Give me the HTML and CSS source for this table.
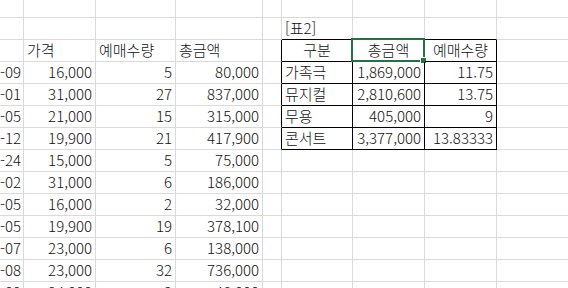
FILE: index.html
```html
<!DOCTYPE html>
<html lang="ko">
<head>
<meta charset="utf-8">
<link rel="stylesheet" href="styles.css">
</head>
<body>
<div class="sheet">
  <!-- row 0 -->
  <div class="c"></div><div class="c"></div><div class="c"></div><div class="c"></div><div class="c"></div><div class="c"></div><div class="c"></div><div class="c"></div><div class="c"></div>
  <!-- row 1 -->
  <div class="c"></div><div class="c"></div><div class="c"></div><div class="c"></div><div class="c"></div><div class="c tt l">[표2]</div><div class="c tt"></div><div class="c tt"></div><div class="c"></div>
  <!-- row 2 -->
  <div class="c"></div><div class="c l">가격</div><div class="c l">예매수량</div><div class="c l">총금액</div><div class="c tl"></div><div class="c tb ctr">구분</div><div class="c tb ctr sel">총금액<span class="selbox"><span class="handle"></span></span></div><div class="c tb ctr">예매수량</div><div class="c"></div>
  <!-- row 3 -->
  <div class="c r d">2023-04-09</div><div class="c r">16,000</div><div class="c r">5</div><div class="c r">80,000</div><div class="c tl"></div><div class="c tb l">가족극</div><div class="c tb r">1,869,000</div><div class="c tb r">11.75</div><div class="c"></div>
  <!-- row 4 -->
  <div class="c r d">2023-05-01</div><div class="c r">31,000</div><div class="c r">27</div><div class="c r">837,000</div><div class="c tl"></div><div class="c tb l">뮤지컬</div><div class="c tb r">2,810,600</div><div class="c tb r">13.75</div><div class="c"></div>
  <!-- row 5 -->
  <div class="c r d">2023-05-05</div><div class="c r">21,000</div><div class="c r">15</div><div class="c r">315,000</div><div class="c tl"></div><div class="c tb l">무용</div><div class="c tb r">405,000</div><div class="c tb r">9</div><div class="c"></div>
  <!-- row 6 -->
  <div class="c r d">2023-05-12</div><div class="c r">19,900</div><div class="c r">21</div><div class="c r">417,900</div><div class="c tl"></div><div class="c tb l">콘서트</div><div class="c tb r">3,377,000</div><div class="c tb r">13.83333</div><div class="c"></div>
  <!-- row 7 -->
  <div class="c r d">2023-05-24</div><div class="c r">15,000</div><div class="c r">5</div><div class="c r">75,000</div><div class="c"></div><div class="c"></div><div class="c"></div><div class="c"></div><div class="c"></div>
  <!-- row 8 -->
  <div class="c r d">2023-06-02</div><div class="c r">31,000</div><div class="c r">6</div><div class="c r">186,000</div><div class="c"></div><div class="c"></div><div class="c"></div><div class="c"></div><div class="c"></div>
  <!-- row 9 -->
  <div class="c r d">2023-06-05</div><div class="c r">16,000</div><div class="c r">2</div><div class="c r">32,000</div><div class="c"></div><div class="c"></div><div class="c"></div><div class="c"></div><div class="c"></div>
  <!-- row 10 -->
  <div class="c r d">2023-07-05</div><div class="c r">19,900</div><div class="c r">19</div><div class="c r">378,100</div><div class="c"></div><div class="c"></div><div class="c"></div><div class="c"></div><div class="c"></div>
  <!-- row 11 -->
  <div class="c r d">2023-07-07</div><div class="c r">23,000</div><div class="c r">6</div><div class="c r">138,000</div><div class="c"></div><div class="c"></div><div class="c"></div><div class="c"></div><div class="c"></div>
  <!-- row 12 -->
  <div class="c r d">2023-07-08</div><div class="c r">23,000</div><div class="c r">32</div><div class="c r">736,000</div><div class="c"></div><div class="c"></div><div class="c"></div><div class="c"></div><div class="c"></div>
  <!-- row 13 -->
  <div class="c r d">2023-08-09</div><div class="c r">24,000</div><div class="c r">2</div><div class="c r">48,000</div><div class="c"></div><div class="c"></div><div class="c"></div><div class="c"></div><div class="c"></div>
</div>
</body>
</html>
```

FILE: styles.css
```css
html, body {
  margin: 0;
  padding: 0;
  height: 288px;
  background: #ffffff;
  overflow: hidden;
}

.sheet {
  display: grid;
  grid-template-columns: 24px 72px 80px 87px 19px 71px 72px 72px 72px;
  grid-auto-rows: 22px;
  margin-top: -4px;
  font-family: "Noto Sans CJK KR", "Noto Sans", sans-serif;
  font-size: 15px;
  font-weight: 300;
  color: #111111;
}

.c {
  box-sizing: border-box;
  border-right: 1px solid #dadada;
  border-bottom: 1px solid #dadada;
  display: flex;
  align-items: flex-end;
  padding: 0 3px 2px 3px;
  line-height: 19px;
  white-space: nowrap;
  overflow: hidden;
  position: relative;
}

.r { justify-content: flex-end; }
.l { justify-content: flex-start; }
.ctr { justify-content: center; }
.d { padding-right: 2px; }

.tl { border-right-color: #000000; }
.tt { border-bottom-color: #000000; }
.tb {
  border-right-color: #000000;
  border-bottom-color: #000000;
}

.sel { overflow: visible; }

.selbox {
  position: absolute;
  left: -2px;
  top: -2px;
  right: -1px;
  bottom: -1px;
  border: 2px solid #217346;
  pointer-events: none;
}

.handle {
  position: absolute;
  right: -4px;
  bottom: -4px;
  width: 5px;
  height: 5px;
  background: #217346;
  border: 1px solid #ffffff;
}
```
